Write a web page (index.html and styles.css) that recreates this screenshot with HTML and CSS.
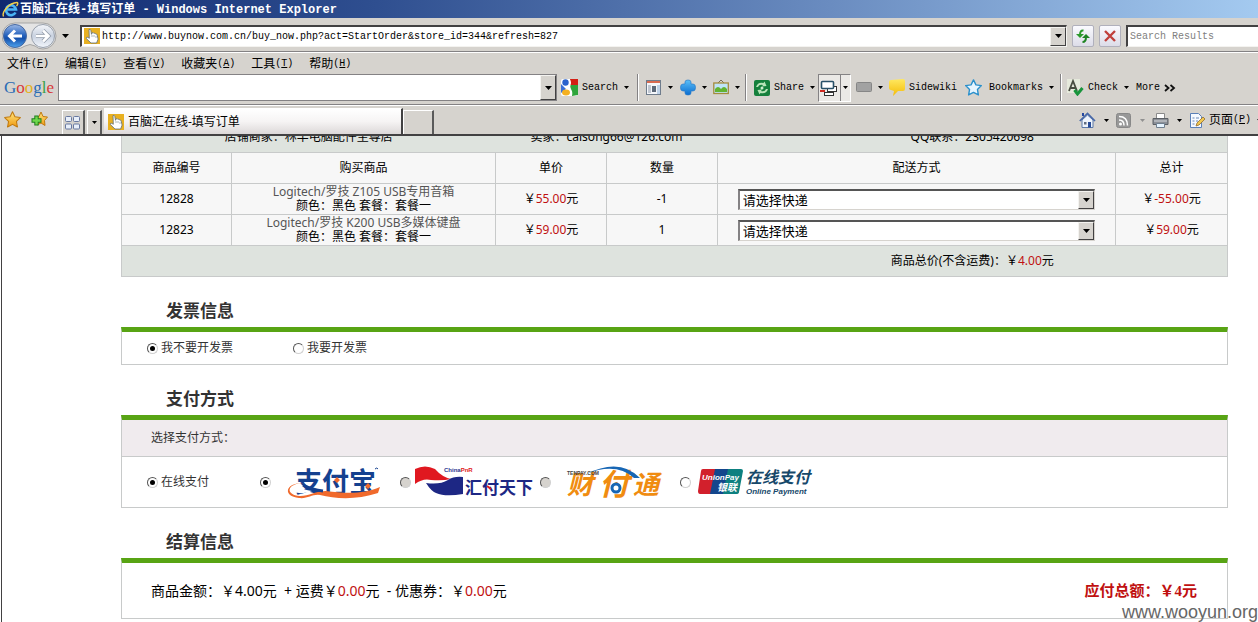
FILE: index.html
```html
<!DOCTYPE html>
<html lang="zh-CN">
<head>
<meta charset="utf-8">
<title>百脑汇在线-填写订单</title>
<link rel="stylesheet" href="styles.css">
</head>
<body>
<svg width="0" height="0" class="defs" aria-hidden="true">
  <defs>
    <linearGradient id="blueBall" x1="0" y1="0" x2="0" y2="1"><stop offset="0" stop-color="#9db9e6"/><stop offset=".45" stop-color="#2a66c0"/><stop offset=".6" stop-color="#1450ac"/><stop offset="1" stop-color="#4fa4ee"/></linearGradient>
    <linearGradient id="greyBall" x1="0" y1="0" x2="0" y2="1"><stop offset="0" stop-color="#f4f6fa"/><stop offset=".5" stop-color="#c9d2e0"/><stop offset="1" stop-color="#f2f6fc"/></linearGradient>
    <linearGradient id="gold" x1="0" y1="0" x2="0" y2="1"><stop offset="0" stop-color="#ffe680"/><stop offset="1" stop-color="#f09a10"/></linearGradient>
    <linearGradient id="note" x1="0" y1="0" x2="0" y2="1"><stop offset="0" stop-color="#ffe860"/><stop offset="1" stop-color="#f4bc08"/></linearGradient>
    <linearGradient id="sky" x1="0" y1="0" x2="0" y2="1"><stop offset="0" stop-color="#5cc0f8"/><stop offset="1" stop-color="#0a6cd0"/></linearGradient>
    <symbol id="hand" viewBox="0 0 16 16"><rect width="16" height="16" fill="#e8b020"/><path d="M5 1.500q1.300-.8 1.800.8l.7 4 .6-1.500q1.200-.6 1.700.5 1.200-.6 1.700.6 1.400-.3 1.700 1.200l.9 4-1.500 3.900H7L2.300 10.500q-.3-1.500 1.500-1.200l1.500 1z" fill="#fff" stroke="#5e6f78" stroke-width=".8"/><path d="M8 7v2M10 7v2M12 8v2" stroke="#8b989c" stroke-width=".7"/></symbol>
    <symbol id="tri" viewBox="0 0 7 4"><path d="M0 0h7L3.500 4z" fill="currentColor"/></symbol>
    <symbol id="star" viewBox="0 0 16 16"><path d="M8 .8l2.300 4.700 5.100.7-3.700 3.600.9 5.200L8 12.600 3.400 15l.9-5.200L.6 6.200l5.100-.7z" stroke-linejoin="round"/></symbol>
  </defs>
</svg>

<div class="window">
  <header class="titlebar">
    <svg width="17" height="17" viewBox="0 0 17 17"><path d="M13.500 11.500A5 5 0 1 1 14 8.500H5" fill="none" stroke="#4ab4f4" stroke-width="2.600"/><path d="M1.500 15.500C-.5 11 7 2 15 1.500c1.500.2.5 2.500-.5 3.500" fill="none" stroke="#f3cf4a" stroke-width="1.400"/></svg>
    <span>百脑汇在线-填写订单 - Windows Internet Explorer</span>
  </header>

  <div class="addressbar">
    <svg class="nav" width="56" height="28" viewBox="0 0 56 28"><path d="M13 1h28a13 13 0 0 1 0 26q-5 0-8-3-5-3-10 0-4 3-10 3A13 13 0 0 1 13 1z" fill="#e4e4e4" stroke="#a5a5a5"/><circle cx="13" cy="14" r="11.500" fill="url(#blueBall)" stroke="#4668a0"/><circle cx="41" cy="14" r="11.500" fill="url(#greyBall)" stroke="#98a0ac"/><path d="M20 14H8M13 8.500L7.500 14l5.500 5.500" fill="none" stroke="#fff" stroke-width="3"/><path d="M34 14h12M41 8.500l5.500 5.500-5.500 5.500" fill="none" stroke="#8f98a6" stroke-width="4"/><path d="M34 14h12M41 8.500l5.500 5.500-5.500 5.500" fill="none" stroke="#fff" stroke-width="2.600"/></svg>
    <svg class="tri" width="7" height="4"><use href="#tri"/></svg>
    <div class="field url">
      <svg width="16" height="16"><use href="#hand"/></svg>
      <input type="text" aria-label="地址" value="http://www.buynow.com.cn/buy_now.php?act=StartOrder&amp;store_id=344&amp;refresh=827">
      <button class="drop" aria-label="地址列表"><svg width="7" height="4"><use href="#tri"/></svg></button>
    </div>
    <button class="go" aria-label="刷新"><svg width="16" height="16" viewBox="0 0 16 16"><path d="M8.500 2.500Q5 2 5 7" fill="none" stroke="#2c9a2c" stroke-width="2"/><path d="M1 6h8L5 10z" fill="#2c9a2c"/><path d="M7.500 14q3.500 0 3.500-5" fill="none" stroke="#1f8424" stroke-width="2"/><path d="M7 10h8l-4-4z" fill="#1f8424"/></svg></button>
    <button class="go" aria-label="停止"><svg width="16" height="16" viewBox="0 0 16 16"><path d="M3 3l10 10M13 3L3 13" stroke="#c0403c" stroke-width="2.400"/></svg></button>
    <div class="field results"><input type="text" aria-label="Search Results" placeholder="Search Results"></div>
  </div>

  <nav class="menubar">
    <a href="#">文件<span class="lat">(<u>F</u>)</span></a>
    <a href="#">编辑<span class="lat">(<u>E</u>)</span></a>
    <a href="#">查看<span class="lat">(<u>V</u>)</span></a>
    <a href="#">收藏夹<span class="lat">(<u>A</u>)</span></a>
    <a href="#">工具<span class="lat">(<u>T</u>)</span></a>
    <a href="#">帮助<span class="lat">(<u>H</u>)</span></a>
  </nav>

  <div class="googlebar">
    <div class="google"><span class="b">G</span><span class="r">o</span><span class="y">o</span><span class="b">g</span><span class="g">l</span><span class="r">e</span></div>
    <div class="field gfield">
      <input type="text" aria-label="Google">
      <button class="drop" aria-label="历史"><svg width="7" height="4"><use href="#tri"/></svg></button>
    </div>
    <div class="tools">
      <button class="tool"><svg width="17" height="17" viewBox="0 0 17 17"><rect width="17" height="17" rx="2" fill="#fff"/><path d="M9 0h8v6H9z" fill="#d41f14"/><path d="M9 6h8v10l-6 1q-1-6-2-11z" fill="#2fa53b"/><circle cx="4.500" cy="3.500" r="3.200" fill="#2a62cc"/><path d="M0 5l5 5-5 4z" fill="#3a70d8"/><ellipse cx="5" cy="13.500" rx="4" ry="3" fill="#f4b020"/><path d="M8 0q3 5-1 8 5 4 3 9" fill="none" stroke="#fff" stroke-width="1.500"/></svg><span>Search</span><svg class="sm" width="5" height="3" viewBox="0 0 7 4"><use href="#tri"/></svg></button>
      <i class="sep"></i>
      <button class="tool" aria-label="新闻"><svg width="17" height="17" viewBox="0 0 17 17"><rect x="1.500" y="1.500" width="14" height="14" fill="#f4f6fa" stroke="#6f7c8c"/><path d="M2 3h13" stroke="#d86a50" stroke-width="2"/><path d="M3 7h3M3 9h3M3 11h3M3 13h3" stroke="#8d98a8"/><path d="M7 7h4v6H7z" fill="#5c6878"/><path d="M12 6h3v9h-3z" fill="#bfd2e8"/></svg><svg class="sm" width="5" height="3" viewBox="0 0 7 4"><use href="#tri"/></svg></button>
      <button class="tool" aria-label="添加"><svg width="16" height="17" viewBox="0 0 16 17"><path d="M5 5V3q0-2 3-2t3 2v2h2q2.500 0 2.500 3.500T13 12h-2v2q0 2-3 2t-3-2v-2H3Q.5 12 .5 8.500T3 5z" fill="url(#sky)" stroke="#2c7cc8" stroke-width=".7"/></svg><svg class="sm" width="5" height="3" viewBox="0 0 7 4"><use href="#tri"/></svg></button>
      <button class="tool" aria-label="图片"><svg width="16" height="17" viewBox="0 0 16 17"><path d="M5 4l3-3 3 3" fill="none" stroke="#786c54"/><rect x=".8" y="4" width="14.500" height="10.500" fill="#bfe4f8" stroke="#a48c3c" stroke-width="1.300"/><path d="M2 10q3-4 6 0 3-4 6 0v3H2z" fill="#62b432"/></svg><svg class="sm" width="5" height="3" viewBox="0 0 7 4"><use href="#tri"/></svg></button>
      <i class="sep"></i>
      <button class="tool"><svg width="16" height="16" viewBox="0 0 16 16"><rect width="16" height="16" rx="2" fill="#15803c"/><path d="M2 7q2-5.500 7.500-4l1-1.500 2 4.500-4.500.5 1-1.500Q5 4 4 7zM14 9q-2 5.500-7.500 4l-1 1.500-2-4.500L8 9.500 7 11q4 1 5-2z" fill="#b8e4b8"/><circle cx="8" cy="8" r="1.500" fill="#cdeccd"/></svg><span>Share</span><svg class="sm" width="5" height="3" viewBox="0 0 7 4"><use href="#tri"/></svg></button>
      <button class="tool pressed" aria-label="弹出窗口"><svg width="20" height="20" viewBox="0 0 20 20"><rect x="8.500" y="8.500" width="9" height="5" fill="#fff" stroke="#333"/><rect x="2.500" y="3.500" width="12" height="7" rx="1" fill="#fff" stroke="#285068" stroke-width="1.600"/><rect x="5.500" y="14.500" width="9" height="3" fill="#fff" stroke="#333"/><path d="M1 13h5" stroke="#d02820" stroke-width="2"/></svg><span class="half"><svg class="sm" width="5" height="3" viewBox="0 0 7 4"><use href="#tri"/></svg></span></button>
      <button class="tool" aria-label="标记"><svg width="16" height="17" viewBox="0 0 16 17"><rect x=".5" y="3.500" width="15" height="9" rx="1" fill="#a2a2a2" stroke="#868686"/></svg><svg class="sm" width="5" height="3" viewBox="0 0 7 4"><use href="#tri"/></svg></button>
      <button class="tool"><svg width="16" height="17" viewBox="0 0 16 17"><path d="M2 1l12-1q2 0 2 2v8q0 2-2 2H9l-5 5 1-5-3-1q-2 0-2-2V3q0-2 2-2z" fill="url(#note)"/></svg><span>Sidewiki</span></button>
      <button class="tool"><svg width="17" height="17" viewBox="0 0 16 16"><use href="#star" fill="#e6f5ff" stroke="#2a90cc" stroke-width="1.300"/></svg><span class="wide">Bookmarks</span><svg class="sm" width="5" height="3" viewBox="0 0 7 4"><use href="#tri"/></svg></button>
      <i class="sep"></i>
      <button class="tool"><svg width="17" height="17" viewBox="0 0 17 17"><rect width="13" height="14" fill="#e6eadc"/><path d="M2 12L6 2l4 10M3.500 9h5" fill="none" stroke="#484c40" stroke-width="1.800"/><path d="M7.500 11l3 4 5-6" fill="none" stroke="#18943c" stroke-width="3"/></svg><span>Check</span><svg class="sm" width="5" height="3" viewBox="0 0 7 4"><use href="#tri"/></svg></button>
      <button class="tool"><span>More</span><svg width="12" height="8" viewBox="0 0 12 8"><path d="M1 1l3.500 3L1 7M6.500 1L10 4 6.500 7" fill="none" stroke="#111" stroke-width="1.800"/></svg></button>
    </div>
  </div>

  <div class="tabbar">
    <svg class="fav" width="17" height="17" viewBox="0 0 16 16"><use href="#star" fill="url(#gold)" stroke="#c07a10"/></svg>
    <svg class="fav" width="17" height="17" viewBox="0 0 17 17"><path d="M10 1l2 4.500 4.500.5-3 3.500.5 5-4-2.500L6 14l.5-5L4 6l4-.5z" fill="url(#gold)" stroke="#c07a10"/><path d="M5.500 4.500v10M.5 9.500h10" stroke="#1e7e1e" stroke-width="4.400"/><path d="M5.500 5.500v8M1.500 9.500h8" stroke="#6fd84c" stroke-width="2.400"/></svg>
    <button class="tabbtn quick" aria-label="快速导航选项卡"><svg width="16" height="14" viewBox="0 0 16 14"><g fill="#e8effa" stroke="#6878a0"><rect x=".5" y=".5" width="6" height="5" rx="1"/><rect x="8.500" y=".5" width="6" height="5" rx="1"/><rect x=".5" y="8" width="6" height="5" rx="1"/><rect x="8.500" y="8" width="6" height="5" rx="1"/></g></svg></button>
    <button class="tabbtn list" aria-label="选项卡列表"><svg width="5" height="3" viewBox="0 0 7 4"><use href="#tri"/></svg></button>
    <a class="tab" href="#"><svg width="16" height="16"><use href="#hand"/></svg><span>百脑汇在线-填写订单</span></a>
    <button class="tabbtn new" aria-label="新选项卡"></button>
    <div class="commands">
      <button aria-label="主页"><svg width="17" height="17" viewBox="0 0 17 17"><path d="M3 8v7.500h11V8L8.500 3z" fill="#eef4fc" stroke="#5a78a8"/><path d="M3 1h2v3H3z" fill="#2448a0"/><path d="M.8 9L8.500 1.500 16 9" fill="none" stroke="#4868a8" stroke-width="1.700"/><path d="M9 10h3v5.500H9z" fill="#284c98"/><path d="M5 10h2.500v2.500H5z" fill="#606c80"/></svg><svg class="tri" width="5" height="3" viewBox="0 0 7 4"><use href="#tri"/></svg></button>
      <button class="off" aria-label="源"><svg width="16" height="16" viewBox="0 0 16 16"><rect x=".5" y="1.500" width="14" height="14" rx="2" fill="#989898" stroke="#888"/><circle cx="4.500" cy="12" r="1.500" fill="#fff"/><path d="M3 8q5 0 5 5.500M3 4.500q8.500 0 8.500 9" fill="none" stroke="#fff" stroke-width="1.500"/></svg><svg class="tri" width="5" height="3" viewBox="0 0 7 4"><use href="#tri"/></svg></button>
      <button aria-label="打印"><svg width="17" height="17" viewBox="0 0 17 17"><path d="M4.500 1.500h8V7h-8z" fill="#fff" stroke="#8a8a8a"/><path d="M1 6.500h15v6H1z" fill="#8b8f96" stroke="#5c6066"/><path d="M2 9h13" stroke="#d4d8dc"/><path d="M4.500 11.500h8v4h-8z" fill="#e6f4ff" stroke="#708090"/></svg><svg class="tri" width="5" height="3" viewBox="0 0 7 4"><use href="#tri"/></svg></button>
      <button class="page-menu"><svg width="17" height="17" viewBox="0 0 17 17"><path d="M1.500 1.500h8l3 3v11h-11z" fill="#f5f9ff" stroke="#5a80b8"/><path d="M3.500 6h2M3.500 9h2M3.500 12h2M7 6h3M7 9h2" stroke="#6888b8" stroke-width="1.200"/><path d="M7 14l1-3 6-6 2 2-6 6z" fill="#f0c850" stroke="#946c30" stroke-width=".8"/></svg><span>页面<span class="lat">(<u>P</u>)</span></span><svg class="tri" width="5" height="3" viewBox="0 0 7 4"><use href="#tri"/></svg></button>
    </div>
  </div>

  <main class="page">
    <div class="content">
      <table class="order">
        <colgroup><col class="c-id"><col class="c-name"><col class="c-price"><col class="c-price"><col><col class="c-sum"></colgroup>
        <tbody>
        <tr class="shade"><td colspan="2">店铺商家：林丰电脑配件至尊店</td><td colspan="2">卖家：caisong66@126.com</td><td colspan="2">QQ联系：2305420698</td></tr>
        <tr><th>商品编号</th><th>购买商品</th><th>单价</th><th>数量</th><th>配送方式</th><th>总计</th></tr>
        <tr><td>12828</td><td class="goods"><a href="#">Logitech/罗技 Z105 USB专用音箱</a><br>颜色：黑色 套餐：套餐一</td><td>￥<em>55.00</em>元</td><td>-1</td>
          <td><div class="ship"><select aria-label="配送方式 12828"><option>请选择快递</option></select><span class="drop"><svg width="7" height="4"><use href="#tri"/></svg></span></div></td><td>￥<em>-55.00</em>元</td></tr>
        <tr><td>12823</td><td class="goods"><a href="#">Logitech/罗技 K200 USB多媒体键盘</a><br>颜色：黑色 套餐：套餐一</td><td>￥<em>59.00</em>元</td><td>1</td>
          <td><div class="ship"><select aria-label="配送方式 12823"><option>请选择快递</option></select><span class="drop"><svg width="7" height="4"><use href="#tri"/></svg></span></div></td><td>￥<em>59.00</em>元</td></tr>
        <tr class="shade total"><td colspan="4"></td><td colspan="2">商品总价(不含运费)：￥<em>4.00</em>元</td></tr>
        </tbody>
      </table>

      <h2>发票信息</h2>
      <section class="box invoice">
        <label><input type="radio" name="invoice" checked>我不要开发票</label>
        <label><input type="radio" name="invoice">我要开发票</label>
      </section>

      <h2>支付方式</h2>
      <section class="box">
        <div class="pay-title">选择支付方式：</div>
        <div class="pay">
          <label class="mode"><input type="radio" name="mode" checked>在线支付</label>
          <label><input type="radio" name="bank" checked aria-label="支付宝"><svg width="128" height="36" viewBox="0 0 128 36">
            <text x="23" y="28" class="logo" font-size="27" fill="#15418f">支付宝</text>
            <path d="M33 19C14 19 13 31 28 32c9 0 16-5 26-5 18 2 36 4 54-4l-2 6c-21 7-42 6-58 2-8-1-12 4-21 3-17-2-14-16 6-15z" fill="#f06a2c"/>
            <path d="M31 21c-8 0-12 3-11 5 1 4 13 4 20 1-8-1-12-3-9-6z" fill="#fff"/>
            <path d="M31 21c6 3 12 5 20 6" fill="none" stroke="#15418f" stroke-width="3"/>
            <path d="M65 13l3 3-3 3-3-3zM96 19l3 3-3 3-3-3z" fill="#f06a2c"/><path d="M103 5q2-2 3 0" stroke="#15418f" fill="none"/></svg></label>
          <label><input type="radio" class="dim" name="bank" aria-label="汇付天下"><svg width="128" height="36" viewBox="0 0 128 36">
            <path d="M3 5q10-5 20 0 7 8 16 10-8 2-20 1Q11 14 3 20z" fill="#e01820"/>
            <path d="M14 19q14 2 22-3 6-4 15-3v17q-18 3-27-1-5-2-10-10z" fill="#1d2784"/>
            <text x="32" y="8" class="tiny" font-size="6" fill="#2b3690">China<tspan fill="#e01820">PnR</tspan></text>
            <text x="53" y="30" class="logo-cn" font-size="17" fill="#1d2784">汇付天下</text><path d="M75 22l4 3" stroke="#e01820" stroke-width="2"/></svg></label>
          <label><input type="radio" class="dim" name="bank" aria-label="财付通"><svg width="128" height="36" viewBox="0 0 128 36">
            <text class="logo italic" fill="#f08c10"><tspan x="15" y="30" font-size="26">财</tspan><tspan x="47" y="31" font-size="30">付</tspan><tspan x="81" y="30" font-size="26">通</tspan></text>
            <path d="M34 10Q68-7 88 14h-6Q64-2 34 10z" fill="#1766b4"/>
            <text x="15" y="11" class="tiny" font-size="5" fill="#444">TENPAY.COM</text>
            <circle cx="64" cy="24" r="4" fill="#fff" stroke="#1766b4" stroke-width="3"/></svg></label>
          <label><input type="radio" name="bank" aria-label="银联在线支付"><svg width="128" height="36" viewBox="0 0 128 36">
            <path d="M11 5h15l-4 25H8q-2 0-2-3L9 7q0-2 2-2z" fill="#d2202c"/><path d="M23 5h15l-5 25H18z" fill="#14468c"/><path d="M36 5h13q2 0 2 2l-4 21q0 2-3 2H31z" fill="#0d8080"/>
            <text x="10" y="16" class="logo-sans italic" font-size="8" fill="#fff">UnionPay</text><text x="25" y="27" class="logo italic" font-size="10" fill="#fff">银联</text>
            <text x="54" y="19" class="logo italic" font-size="16" fill="#16486a">在线支付</text><text x="54" y="30" class="logo-sans italic" font-size="8" fill="#16486a">Online Payment</text></svg></label>
        </div>
      </section>

      <h2>结算信息</h2>
      <section class="box settle">
        <div>商品金额：￥4.00元 &nbsp;+ 运费￥<em>0.00</em>元 &nbsp;- 优惠券：￥<em>0.00</em>元</div>
        <strong>应付总额：￥4元</strong>
      </section>
    </div>
  </main>
  <div class="watermark">www.wooyun.org</div>
</div>
</body>
</html>
```
FILE: styles.css
```css
* { box-sizing: border-box; }

body {
  margin: 0;
  color: #000;
  background: #fff;
  font: 12px/14px "Noto Sans", "Noto Sans CJK SC", sans-serif;
}

.defs { position: absolute; }
svg { display: block; flex: none; }
a { color: inherit; text-decoration: none; }
em { color: #c01010; font-style: normal; }
button { padding: 0; border: 0; background: none; color: inherit; font: inherit; }
input { font: inherit; }

.window {
  position: relative;
  display: flex;
  flex-direction: column;
  height: 100vh;
  overflow: hidden;
}

/* Browser chrome */
.titlebar, .addressbar, .menubar, .googlebar, .tabbar {
  display: flex;
  align-items: center;
  flex: none;
  background: #d6d3ce;
  white-space: nowrap;
}

.titlebar {
  height: 18px;
  gap: 1px;
  padding-left: 2px;
  color: #fff;
  background: linear-gradient(90deg, #0f286f, #2f4f90 30%, #6a8cc0 66%, #a4caf0);
  font: bold 12px/18px "Liberation Mono", "Noto Sans CJK SC", monospace;
}

.titlebar span { padding-top: 2px; }

.addressbar {
  height: 34px;
  padding: 2px 0 0 2px;
  border-bottom: 1px solid #848284;
}

.addressbar .tri { margin: 0 11px 0 4px; }

.field {
  display: flex;
  align-items: center;
  height: 22px;
  background: #fff;
  border: 1px solid #848284;
  border-top: 2px solid #424142;
  border-left: 2px solid #424142;
  border-right-color: #f4f3f0;
  border-bottom-color: #f4f3f0;
}

.field input {
  flex: 1;
  min-width: 0;
  padding: 2px 2px 0;
  border: 0;
  outline: 0;
  background: none;
  font: 10px/16px "Liberation Mono", monospace;
}

.field input::placeholder { color: #808080; opacity: 1; }
.url { flex: 1; padding-left: 2px; }

.drop {
  display: flex;
  align-items: center;
  justify-content: center;
  align-self: stretch;
  width: 16px;
  background: #d6d3ce;
  border: 1px solid;
  border-color: #f4f3f0 #424142 #424142 #f4f3f0;
}

.go {
  display: grid;
  place-items: center;
  width: 22px;
  height: 22px;
  margin-left: 5px;
  border: 1px solid #b0b0bc;
  border-radius: 2px;
  background: linear-gradient(#fafaff, #dcdce8);
}

.results { width: 132px; margin-left: 5px; border-right: 0; }

.menubar { height: 21px; gap: 16px; padding: 1px 0 0 7px; border-top: 1px solid #fff; }
.menubar a { display: flex; }
.lat { font-family: "Liberation Mono", monospace; font-size: 10px; }

.googlebar { height: 32px; padding: 0 0 2px 4px; border-bottom: 1px solid #848284; }
.google { width: 54px; font: 17px/24px "Liberation Serif", serif; }
.google .b { color: #2a6cb4; }
.google .r { color: #d83838; }
.google .y { color: #e4b020; }
.google .g { color: #38a048; }
.gfield { width: 499px; height: 27px; border-width: 1px; border-color: #848284; }

.tools {
  display: grid;
  grid-template-columns: 76px 8px 35px 33px 32px 9px 64px 38px 33px 76px 95px 7px 69px 40px;
  align-items: center;
  padding-left: 4px;
}

.tool { display: flex; align-items: center; gap: 4px; font: 10px/16px "Liberation Mono", monospace; }
.tool .wide { padding-left: 3px; }
.tool .sm { margin-left: 2px; }
.sep { width: 2px; height: 27px; border-left: 1px solid #848284; border-right: 1px solid #fff; }

.pressed { width: 33px; height: 28px; gap: 1px; border: 1px solid #848284; border-right-color: #fff; border-bottom-color: #fff; background: #ebe9e6; }
.pressed .half { display: flex; align-items: center; align-self: stretch; width: 11px; border-left: 1px solid #848284; }

.tabbar {
  height: 31px;
  padding-left: 4px;
  border-top: 1px solid #fff;
  border-bottom: 2px solid #424142;
  align-items: flex-end;
}

.fav { margin: 0 10px 6px 0; }
.tabbtn { display: grid; place-items: center; height: 24px; border: 1px solid #fff; border-right: 2px solid #5a5a5a; border-bottom: 0; }
.quick { width: 23px; margin-left: 4px; }
.list { width: 15px; margin-left: 2px; }
.new { width: 31px; }

.tab {
  display: flex;
  align-items: center;
  gap: 4px;
  width: 299px;
  height: 26px;
  margin: 0 0 0 2px;
  padding-left: 4px;
  background: linear-gradient(#fff, #f6f4f4 50%, #dcd8d8);
  border-top: 1px solid #fff;
  border-right: 2px solid #424142;
}

.commands { display: flex; gap: 7px; height: 28px; margin: 0 -4px 0 auto; }
.commands button { display: flex; align-items: center; gap: 8px; }
.commands .off .tri { color: #909090; }
.commands .page-menu { gap: 3px; }
.page-menu > span { display: flex; }
.page-menu .tri { margin-left: 3px; }

/* Order page */
.page { flex: 1; min-height: 0; overflow: hidden; border-left: 1px solid #424142; margin-left: 1px; }
.content { margin: -15px 30px 0 119px; }

.order { width: 100%; table-layout: fixed; border-collapse: collapse; background: #f7f7f7; text-align: center; }
.order td, .order th { height: 31px; padding: 0; border: 1px solid #c8caca; font-weight: normal; }
.order .shade td { background: #dee3de; border-left: 0; border-right: 0; }
.order .shade td:first-child { border-left: 1px solid #c8caca; }
.order .shade td:last-child { border-right: 1px solid #c8caca; }
.c-id { width: 110px; }
.c-name { width: 264px; }
.c-price { width: 111px; }
.c-sum { width: 112px; }
.goods a { color: #555; }

.ship { position: relative; width: 90%; height: 21px; margin: 0 auto; }
.ship select {
  display: block;
  width: 100%;
  height: 21px;
  padding: 0 3px;
  appearance: none;
  border: 2px solid #848284;
  border-top-color: #555;
  border-right: 1px solid #d6d3ce;
  border-bottom: 1px solid #d6d3ce;
  border-radius: 0;
  background: #fff;
  color: #000;
  font: 13px/16px "Noto Sans", "Noto Sans CJK SC", sans-serif;
}
.ship .drop { position: absolute; top: 2px; right: 1px; bottom: 1px; pointer-events: none; }

h2 { margin: 23px 0 7px 45px; color: #333; font: bold 17px/20px "Noto Sans CJK SC", sans-serif; }
.box { border: 1px solid #c8caca; border-top: 5px solid #58a414; color: #333; }
.box label { display: flex; align-items: center; }

input[type="radio"] {
  flex: none;
  display: grid;
  place-items: center;
  width: 11px;
  height: 11px;
  margin: 0 3px 0 0;
  appearance: none;
  border: 1px solid;
  border-color: #555 #d0d0d0 #d0d0d0 #555;
  border-radius: 50%;
  background: #fff;
}
input[type="radio"]:checked::before { content: ""; width: 5px; height: 5px; border-radius: 50%; background: #000; }
input[type="radio"].dim { background: #d6d3ce; }

.invoice { display: flex; gap: 60px; padding: 9px 25px; }
.pay-title { padding: 11px 29px; background: #f0ebee; border-bottom: 1px solid #c8caca; }
.pay { display: grid; grid-template-columns: 113px repeat(4, 140px); align-items: center; height: 50px; padding-left: 25px; }
.pay label:not(.mode) input { margin-right: 1px; }
.logo { font-family: "Noto Sans CJK SC", sans-serif; font-weight: bold; }
.logo-cn { font-family: "Noto Sans CJK SC", sans-serif; font-weight: bold; }
.logo-sans { font-family: "Liberation Sans", sans-serif; font-weight: bold; }
.tiny { font-family: "Liberation Sans", sans-serif; font-weight: bold; }
.italic { font-style: italic; }

.settle { display: flex; align-items: center; justify-content: space-between; height: 61px; padding: 0 30px 0 29px; color: #000; font-size: 14px; line-height: 20px; }
.settle strong { color: #c01010; font: bold 15px/20px "Liberation Serif", "Noto Sans CJK SC", serif; }

.watermark { position: absolute; right: 0; bottom: 0; color: #666; font: 18px/20px "Liberation Sans", sans-serif; }
```
